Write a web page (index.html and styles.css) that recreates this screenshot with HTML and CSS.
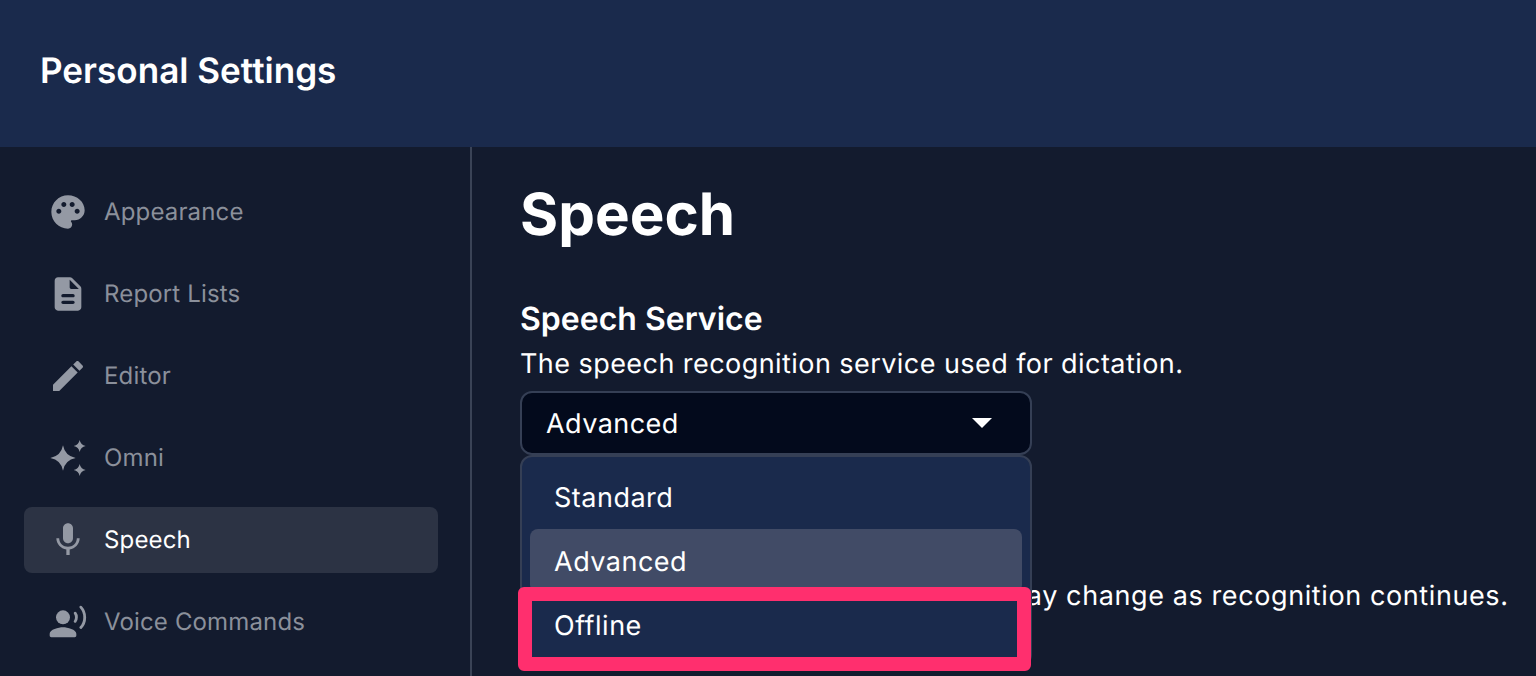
FILE: index.html
```html
<!DOCTYPE html>
<html lang="en">
<head>
    <meta charset="UTF-8">
    <meta name="viewport" content="width=device-width, initial-scale=1.0">
    <title>Personal Settings</title>
    <link rel="stylesheet" href="styles.css">
</head>
<body>
    <header class="top-bar">
        <div class="top-title">Personal Settings</div>
    </header>
    <div class="layout">
        <nav class="sidebar">
            <a class="nav-item">
                <svg class="nav-icon" viewBox="0 0 24 24"><path d="M12 2C6.49 2 2 6.49 2 12s4.49 10 10 10c1.38 0 2.5-1.12 2.5-2.5 0-.61-.23-1.2-.64-1.67-.08-.1-.13-.21-.13-.33 0-.28.22-.5.5-.5H16c3.31 0 6-2.69 6-6 0-4.96-4.49-9-10-9zm5.5 11c-.83 0-1.5-.67-1.5-1.5s.67-1.5 1.5-1.5 1.5.67 1.5 1.5-.67 1.5-1.5 1.5zm-3-4c-.83 0-1.5-.67-1.5-1.5S13.67 6 14.5 6s1.5.67 1.5 1.5S15.33 9 14.5 9zM5 11.5c0-.83.67-1.5 1.5-1.5s1.5.67 1.5 1.5S7.33 13 6.5 13 5 12.33 5 11.5zm6-4c0 .83-.67 1.5-1.5 1.5S8 8.33 8 7.5 8.67 6 9.5 6s1.5.67 1.5 1.5z"/></svg>
                <span class="nav-label">Appearance</span>
            </a>
            <a class="nav-item">
                <svg class="nav-icon" viewBox="0 0 24 24"><path d="M14.59 2.59c-.38-.38-.89-.59-1.42-.59H6c-1.1 0-2 .9-2 2v16c0 1.1.89 2 1.99 2H18c1.1 0 2-.9 2-2V8.83c0-.53-.21-1.04-.59-1.41l-4.82-4.83zM15 18H9c-.55 0-1-.45-1-1s.45-1 1-1h6c.55 0 1 .45 1 1s-.45 1-1 1zm0-4H9c-.55 0-1-.45-1-1s.45-1 1-1h6c.55 0 1 .45 1 1s-.45 1-1 1zm-2-6V3.5L18.5 9H14c-.55 0-1-.45-1-1z"/></svg>
                <span class="nav-label">Report Lists</span>
            </a>
            <a class="nav-item">
                <svg class="nav-icon" viewBox="0 0 24 24"><path d="M3 17.25V21h3.75L17.81 9.94l-3.75-3.75L3 17.25zM20.71 7.04c.39-.39.39-1.02 0-1.41l-2.34-2.34c-.39-.39-1.02-.39-1.41 0l-1.83 1.83 3.75 3.75 1.83-1.83z"/></svg>
                <span class="nav-label">Editor</span>
            </a>
            <a class="nav-item">
                <svg class="nav-icon" viewBox="0 0 24 24"><path d="M9 4.400Q10.200 10.800 16.600 12 10.200 13.200 9 19.600 7.800 13.200 1.400 12 7.800 10.800 9 4.400zM19 1.200Q19.600 4.200 22.600 4.800 19.600 5.400 19 8.400 18.400 5.400 15.400 4.800 18.400 4.200 19 1.200zM19 15.600Q19.600 18.600 22.600 19.200 19.600 19.800 19 22.800 18.400 19.800 15.400 19.200 18.400 18.600 19 15.600z"/></svg>
                <span class="nav-label">Omni</span>
            </a>
            <a class="nav-item active">
                <svg class="nav-icon" viewBox="0 0 24 24"><path d="M12 14c1.66 0 2.990-1.340 2.990-3L15 5c0-1.660-1.340-3-3-3S9 3.340 9 5v6c0 1.660 1.340 3 3 3zm5.300-3c0 3-2.540 5.100-5.300 5.100S6.700 14 6.700 11H5c0 3.410 2.720 6.230 6 6.720V21h2v-3.280c3.280-.48 6-3.300 6-6.720h-1.700z"/></svg>
                <span class="nav-label">Speech</span>
            </a>
            <a class="nav-item">
                <svg class="nav-icon" viewBox="0 0 24 24"><circle cx="9" cy="9.200" r="4.200"/><path d="M9 15.200c-2.670 0-8 1.340-8 3.900v1c0 .55.45 1 1 1h14c.55 0 1-.45 1-1v-1c0-2.560-5.330-3.900-8-3.900z"/><path class="icon-stroke" d="M16.300 6.700C17.300 8 17.300 10.400 16.300 11.600M19.700 3.100C22.800 6.500 22.800 12 19.700 15.300"/></svg>
                <span class="nav-label">Voice Commands</span>
            </a>
        </nav>
        <main class="content">
            <h1 class="page-title">Speech</h1>
            <section class="setting">
                <h2 class="setting-title">Speech Service</h2>
                <p class="setting-desc">The speech recognition service used for dictation.</p>
                <div class="select-wrap">
                    <div class="select-box">
                        <span>Advanced</span>
                        <svg class="select-arrow" viewBox="0 0 20 10"><path d="M0 0h20L10 10z"/></svg>
                    </div>
                    <ul class="select-menu">
                        <li class="select-option">Standard</li>
                        <li class="select-option selected">Advanced</li>
                        <li class="select-option">Offline</li>
                    </ul>
                    <div class="highlight"></div>
                </div>
            </section>
            <p class="setting-desc interim-note">Results appear as you talk, and text may change as recognition continues.</p>
        </main>
    </div>
</body>
</html>
```

FILE: styles.css
```css
* {
    box-sizing: border-box;
}
body {
    margin: 0;
    height: 100vh;
    overflow: hidden;
    background: #131b2e;
    color: #fff;
    font-family: Inter, "Liberation Sans", sans-serif;
    text-rendering: geometricPrecision;
}
.top-bar {
    height: 147px;
    display: flex;
    align-items: center;
    padding: 0 0 5px 40px;
    background: #1a2a4c;
}
.top-title {
    font-size: 35.100px;
    font-weight: 600;
}
.layout {
    display: flex;
    height: calc(100vh - 147px);
}
.sidebar {
    width: 472px;
    flex-shrink: 0;
    display: flex;
    flex-direction: column;
    gap: 16px;
    padding: 32px 32px 0 24px;
    border-right: 2px solid #3a4356;
}
.nav-item {
    height: 66px;
    display: flex;
    align-items: center;
    gap: 16px;
    padding-left: 24px;
    border-radius: 8px;
    font-size: 24px;
    letter-spacing: 0.15px;
    color: #8b909b;
}
.nav-item.active {
    background: #2c3344;
    color: #fff;
}
.nav-label {
    padding-bottom: 2px;
}
.nav-icon {
    width: 40px;
    height: 40px;
    flex-shrink: 0;
    fill: #9499a4;
}
.icon-stroke {
    fill: none;
    stroke: #9499a4;
    stroke-width: 1.7;
    stroke-linecap: round;
}
.content {
    flex: 1;
    padding: 26px 0 0 48px;
}
.page-title {
    margin: 0;
    font-size: 58.300px;
    font-weight: 700;
    line-height: 84px;
}
.setting {
    margin-top: 40px;
}
.setting-title {
    margin: 0;
    font-size: 32px;
    font-weight: 600;
    line-height: 44px;
}
.setting-desc {
    margin: 0;
    padding-top: 1px;
    font-size: 27px;
    letter-spacing: 0.44px;
    line-height: 44px;
}
.interim-note {
    margin-top: 118px;
    letter-spacing: 0.6px;
    white-space: nowrap;
}
.select-wrap {
    position: relative;
    width: 512px;
    margin-top: 5px;
}
.select-box {
    height: 64px;
    display: flex;
    align-items: center;
    justify-content: space-between;
    padding: 0 38px 0 24px;
    background: #030a1c;
    border: 2px solid #353f55;
    border-radius: 12px;
    font-size: 27px;
    letter-spacing: 0.44px;
}
.select-arrow {
    width: 20px;
    height: 10px;
    fill: #fff;
}
.select-menu {
    position: absolute;
    top: 64px;
    left: 0;
    right: 0;
    margin: 0;
    padding: 8px;
    list-style: none;
    background: #1a2a4c;
    border: 2px solid #353f55;
    border-radius: 12px;
    font-size: 27px;
    letter-spacing: 0.5px;
}
.select-option {
    height: 64px;
    display: flex;
    align-items: center;
    padding-left: 24px;
    border-radius: 8px;
}
.select-option.selected {
    background: #414b66;
}
.highlight {
    position: absolute;
    top: 196px;
    left: -2px;
    width: 513px;
    height: 84px;
    border: 14px solid #ff2f6e;
    border-radius: 6px;
}
```
